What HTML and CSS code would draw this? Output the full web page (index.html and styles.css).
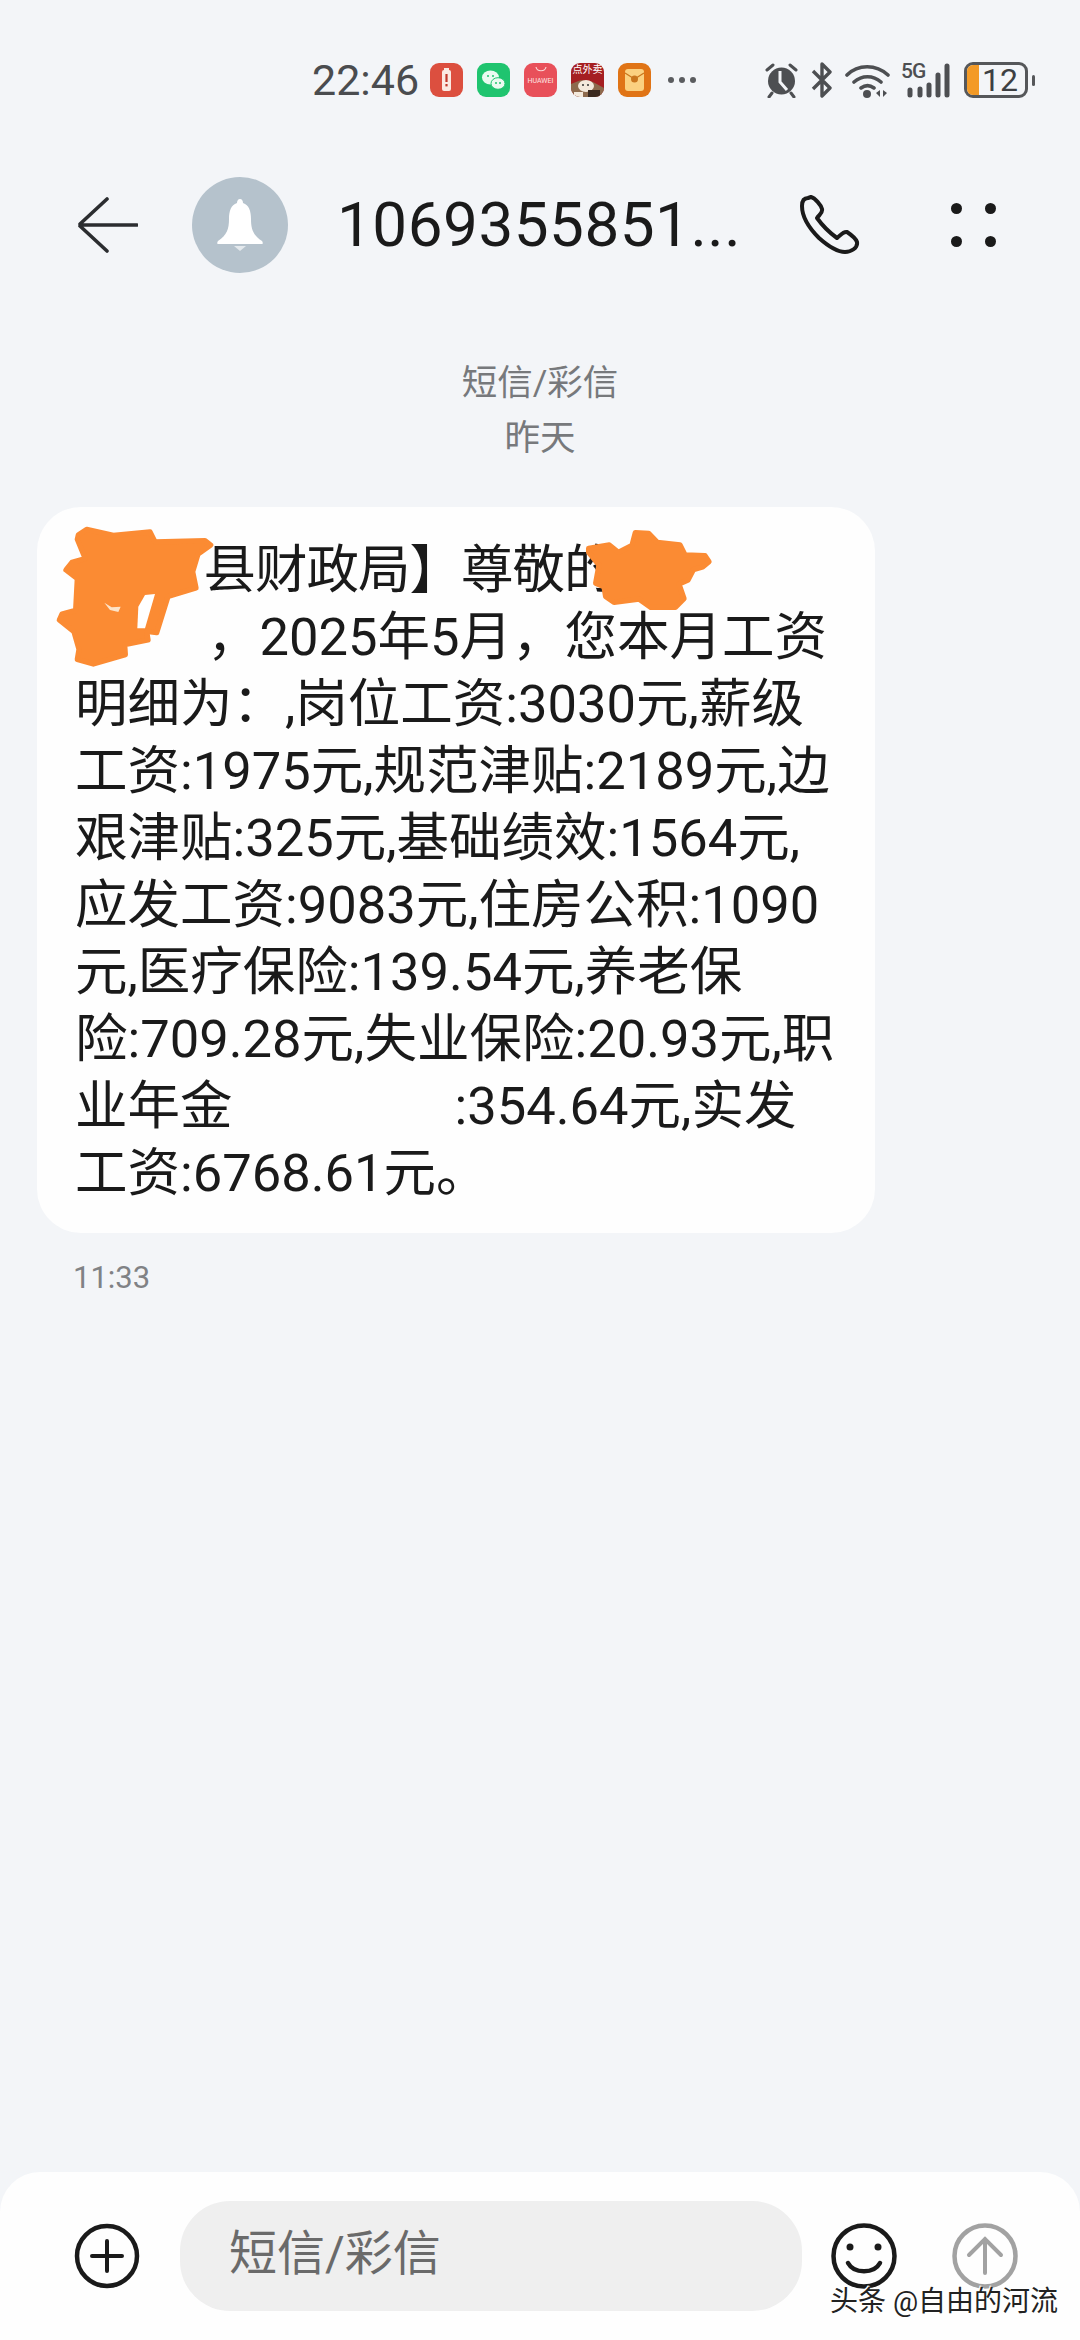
FILE: index.html
```html
<!DOCTYPE html>
<html lang="zh-CN">
<head>
<meta charset="UTF-8">
<meta name="viewport" content="width=device-width, initial-scale=1.0">
<title>短信/彩信</title>
<link rel="stylesheet" href="styles.css">
</head>
<body>

<div class="page">

  <!-- status bar -->
  <div class="status">
    <span class="clock">22:46</span>
    <div class="apps">
      <div class="app app-red">
        <svg width="33" height="34" viewBox="0 0 33 34"><rect x="12" y="7" width="9" height="21" rx="2" fill="#fbe9e2"/><rect x="14" y="5" width="5" height="3" fill="#fbe9e2"/><rect x="15.4" y="11" width="2.2" height="8" fill="#c0392b"/><rect x="15.4" y="21" width="2.2" height="2.4" fill="#c0392b"/></svg>
      </div>
      <div class="app app-green">
        <svg width="33" height="34" viewBox="0 0 33 34"><ellipse cx="13.5" cy="14.5" rx="8.5" ry="7" fill="#eafaf0"/><ellipse cx="21" cy="20.5" rx="7" ry="5.8" fill="#eafaf0" stroke="#1fc46f"/><circle cx="11" cy="13" r="1" fill="#1fc46f"/><circle cx="16" cy="13" r="1" fill="#1fc46f"/><circle cx="19" cy="20" r="1" fill="#1fc46f"/><circle cx="23" cy="20" r="1" fill="#1fc46f"/></svg>
      </div>
      <div class="app app-huawei">
        <svg class="bag" width="12" height="6" viewBox="0 0 12 6"><path d="M1 1c1 5 9 5 10 0" fill="none" stroke="#fbd5d5" stroke-width="1.2"/></svg>
        <span class="huawei-name">HUAWEI</span>
      </div>
      <div class="app app-food">
        <span class="food-name">点外卖</span>
        <svg width="33" height="21" viewBox="0 0 33 21"><path d="M0 21V8l10-4 12 2 11 6v9z" fill="#8d6a4d"/><ellipse cx="15" cy="10" rx="8" ry="6" fill="#f3e9dc"/><circle cx="12" cy="9" r="1" fill="#333"/><circle cx="17" cy="9" r="1" fill="#333"/><rect x="17" y="14" width="12" height="7" fill="#3a2a20"/><rect x="3" y="16" width="9" height="5" fill="#f3e9dc"/></svg>
      </div>
      <div class="app app-orange">
        <svg width="33" height="34" viewBox="0 0 33 34"><rect x="7" y="6" width="19" height="22" rx="3" fill="#fbd180"/><path d="M7 10l9.500 6 9.500-6" fill="none" stroke="#c9761d" stroke-width="1.200"/><circle cx="16.500" cy="16" r="3.500" fill="#c9761d"/></svg>
      </div>
      <div class="more"><i></i><i></i><i></i></div>
    </div>
    <div class="sys">
      <svg class="sys-alarm" width="33" height="36" viewBox="0 0 33 36"><path d="M2 8l6-5M31 8l-6-5M7 31l-3 4M26 31l3 4" stroke="#4d4f52" stroke-width="3" stroke-linecap="round"/><circle cx="16.500" cy="19" r="13.500" fill="#4d4f52"/><path d="M15 9v11l7 8" fill="none" stroke="#f3f5f8" stroke-width="3"/></svg>
      <svg class="sys-bt" width="22" height="36" viewBox="0 0 22 36"><path d="M2 9l17 17-8 8V2l8 8L2 27" fill="none" stroke="#4d4f52" stroke-width="3.400" stroke-linejoin="round"/></svg>
      <svg class="sys-wifi" width="45" height="36" viewBox="0 0 45 36"><path d="M2 13C13 2 31 2 43 13M9 20c8-7 19-7 27 0M16 26c4-3 9-3 13 0" fill="none" stroke="#4d4f52" stroke-width="3.600" stroke-linecap="round"/><circle cx="22" cy="32" r="4" fill="#4d4f52"/><path d="M31 31l4-3v7zM38 28l4 3-4 4z" fill="#4d4f52"/></svg>
      <div class="signal">
        <span class="net">5G</span>
        <svg width="50" height="36" viewBox="0 0 50 36"><g stroke="#4d4f52" stroke-width="5" stroke-linecap="round"><path d="M9 28v5M19 27v6M28 23v10M37 13v20M46 4v29"/></g></svg>
      </div>
      <div class="batt">
        <div class="batt-box"><span class="batt-fill"></span><span class="batt-num">12</span></div>
        <span class="batt-nub"></span>
      </div>
    </div>
  </div>

  <!-- title bar -->
  <div class="header">
    <svg class="back" width="60" height="56" viewBox="0 0 60 56"><path d="M29 2L2 27h0M2 29l27 25M4 28h55" fill="none" stroke="#2b2d30" stroke-width="3.600" stroke-linecap="round"/></svg>
    <div class="avatar">
      <svg width="48" height="52" viewBox="0 0 48 52"><path d="M24 0c2 0 3 2 3 4 6 2 8 8 8 16 0 10 2 16 11 22 1 1 1 3 0 3H2c-1 0-1-2 0-3 9-6 11-12 11-22 0-8 2-14 8-16 0-2 1-4 3-4z" fill="#fff"/><path d="M18 47h12l-6 5z" fill="#e4e9ed"/></svg>
    </div>
    <span class="title">1069355851...</span>
    <svg class="phone" width="60" height="60" viewBox="0 0 60 60"><path d="M8 3C4 3 2 6 2 11c0 11 7 22 17 32 9 8 18 14 26 14 6 0 13-4 12-10-1-3-7-8-10-10-4-1-7 4-10 6-7-5-15-13-20-20 2-3 6-5 5-9C21 10 15 3 11 2z" fill="none" stroke="#1a1a1a" stroke-width="4" stroke-linejoin="round"/></svg>
    <div class="dots"><i></i><i></i><i></i><i></i></div>
  </div>

  <!-- message list -->
  <div class="meta">
    <div>短信/彩信</div>
    <div>昨天</div>
  </div>

  <div class="bubble">
    <div class="ln ln-first">【<span class="gap-a"></span>县财政局】尊敬的</div>
    <div class="ln"><span class="gap-b"></span>，2025年5月，您本月工资</div>
    <div class="ln">明细为：,岗位工资:3030元,薪级</div>
    <div class="ln">工资:1975元,规范津贴:2189元,边</div>
    <div class="ln">艰津贴:325元,基础绩效:1564元,</div>
    <div class="ln">应发工资:9083元,住房公积:1090</div>
    <div class="ln">元,医疗保险:139.54元,养老保</div>
    <div class="ln">险:709.28元,失业保险:20.93元,职</div>
    <div class="ln">业年金<span class="gap-c"></span>:354.64元,实发</div>
    <div class="ln">工资:6768.61元。</div>

    <!-- orange scribbles over the redacted text -->
    <svg class="blob blob-one" width="180" height="190" viewBox="0 0 540 570">
      <path d="M85 105L110 88 190 106 300 96 315 126 465 122 482 135 444 162 428 215 438 264 354 289 320 398 290 394 294 420 224 434 226 464 130 492 82 478 87 448 72 395 28 360 36 342 77 331 82 236 48 210 66 187 106 176 82 118Z" fill="#fb8b33" stroke="#fb8b33" stroke-width="16" stroke-linejoin="round"/>
      <path d="M285 285L315 282 285 385 262 385 265 320Z" fill="#fff"/>
      <path d="M163 308L185 322 212 320 205 336 180 330Z" fill="#fde3c8"/>
    </svg>
    <svg class="blob blob-two" width="170" height="100" viewBox="0 0 510 300">
      <path d="M56 115L118 105 145 127 186 106 196 68 236 70 262 97 330 105 345 135 405 137 417 155 398 171 370 179 354 210 327 222 342 266 316 292 242 292 207 267 132 277 107 260 102 230 77 220 87 165 56 127Z" fill="#fb8b33" stroke="#fb8b33" stroke-width="16" stroke-linejoin="round"/>
    </svg>
  </div>

  <div class="time">11:33</div>

  <div class="spacer"></div>

  <!-- input bar -->
  <div class="composer">
    <svg class="ic-plus" width="66" height="66" viewBox="0 0 66 66"><circle cx="33" cy="33" r="30" fill="none" stroke="#1a1a1a" stroke-width="4.500"/><path d="M18 33h30M33 18v30" stroke="#1a1a1a" stroke-width="4" stroke-linecap="round"/></svg>
    <div class="input">短信/彩信</div>
    <svg class="ic-smile" width="66" height="66" viewBox="0 0 66 66"><circle cx="33" cy="33" r="30.500" fill="none" stroke="#1a1a1a" stroke-width="4.500"/><circle cx="19" cy="24" r="3.500" fill="#1a1a1a"/><circle cx="47" cy="24" r="3.500" fill="#1a1a1a"/><path d="M17 40c6 11 26 11 32 0" fill="none" stroke="#1a1a1a" stroke-width="4.500" stroke-linecap="round"/></svg>
    <svg class="ic-send" width="66" height="66" viewBox="0 0 66 66"><circle cx="33" cy="33" r="30.500" fill="none" stroke="#a2a2a2" stroke-width="4.500"/><path d="M33 50V16M17 32l16-16 16 16" fill="none" stroke="#a2a2a2" stroke-width="4" stroke-linecap="round"/></svg>
    <span class="mark">头条 @自由的河流</span>
  </div>

</div>

</body>
</html>
```

FILE: styles.css
```css
* {
  box-sizing: border-box;
}

html, body {
  margin: 0;
  padding: 0;
}

body {
  background-color: #f3f5f8;
  font-family: Roboto, "Noto Sans CJK SC", sans-serif;
  color: #1a1a1a;
}

.page {
  position: relative;
  width: 1080px;
  height: 2340px;
  overflow: hidden;
  display: flex;
  flex-direction: column;
  padding-top: 62px;
}

/* status bar */
.status {
  display: flex;
  align-items: center;
  height: 36px;
  padding-left: 312px;
}

.clock {
  width: 118px;
  font-size: 43px;
  line-height: 36px;
  color: #4a4c4f;
}

.apps {
  display: flex;
  align-items: center;
  gap: 14px;
}

.app {
  position: relative;
  width: 33px;
  height: 34px;
  border-radius: 9px;
  overflow: hidden;
}

.app svg {
  display: block;
}

.app-red { background-color: #dc4f3f; }
.app-green { background-color: #1fc46f; }
.app-orange { background-color: #e07416; }

.app-huawei {
  background-color: #e8505a;
  display: flex;
  flex-direction: column;
  align-items: center;
}

.bag {
  margin-top: 3px;
}

.huawei-name {
  margin-top: 5px;
  font-size: 7px;
  line-height: 8px;
  color: #fde4e4;
}

.app-food {
  background-color: #a51f22;
}

.food-name {
  display: block;
  height: 13px;
  font-size: 10px;
  line-height: 13px;
  text-align: center;
  color: #fff;
  white-space: nowrap;
}

.more {
  display: flex;
  gap: 5px;
  margin-left: 3px;
}

.more i {
  width: 6px;
  height: 6px;
  border-radius: 50%;
  background-color: #5a5c5f;
}

.sys {
  display: flex;
  align-items: center;
  margin-left: 69px;
}

.sys-bt { margin-left: 13px; }
.sys-wifi { margin-left: 12px; }

.signal {
  position: relative;
  width: 50px;
  height: 36px;
  margin-left: 11px;
}

.signal svg {
  display: block;
}

.net {
  position: absolute;
  left: 0;
  top: -1px;
  font-size: 21px;
  line-height: 20px;
  letter-spacing: -1px;
  font-weight: 500;
  color: #4d4f52;
}

.batt {
  display: flex;
  align-items: center;
  margin-left: 13px;
}

.batt-box {
  position: relative;
  width: 64px;
  height: 36px;
  border: 3px solid #55575a;
  border-radius: 9px;
  overflow: hidden;
  text-align: center;
}

.batt-fill {
  position: absolute;
  left: 0;
  top: 0;
  bottom: 0;
  width: 12px;
  background-color: #f39a26;
}

.batt-num {
  position: relative;
  padding-left: 8px;
  font-size: 32px;
  line-height: 30px;
  color: #3d3f42;
}

.batt-nub {
  width: 3px;
  height: 11px;
  margin-left: 4px;
  border-radius: 2px;
  background-color: #55575a;
}

/* title bar */
.header {
  display: flex;
  align-items: center;
  height: 96px;
  margin-top: 79px;
  padding-left: 78px;
}

.avatar {
  display: flex;
  align-items: center;
  justify-content: center;
  width: 96px;
  height: 96px;
  margin-left: 54px;
  border-radius: 50%;
  background-color: #b5c2cc;
}

.title {
  width: 463px;
  margin-left: 49px;
  font-size: 62px;
  line-height: 96px;
  letter-spacing: 0.5px;
  white-space: nowrap;
}

.dots {
  display: grid;
  grid-template-columns: 11px 11px;
  column-gap: 23px;
  row-gap: 22px;
  margin-left: 91px;
}

.dots i {
  width: 11px;
  height: 11px;
  border-radius: 50%;
  background-color: #1a1a1a;
}

/* message list */
.meta {
  margin-top: 83px;
  font-size: 35.5px;
  line-height: 55px;
  text-align: center;
  color: #77797c;
}

.bubble {
  position: relative;
  width: 838px;
  height: 726px;
  margin: 41px 0 0 37px;
  padding: 30px 0 0 38px;
  border-radius: 44px;
  background-color: #fefefe;
}

.ln {
  height: 67px;
  font-size: 52.5px;
  line-height: 67px;
  white-space: nowrap;
}

.ln-first {
  letter-spacing: -1px;
}

.gap-a,
.gap-b,
.gap-c {
  display: inline-block;
}

.gap-a { width: 77px; }
.gap-b { width: 132px; }
.gap-c { width: 222px; }

.blob {
  position: absolute;
}

.blob-one {
  left: 13px;
  top: -7px;
}

.blob-two {
  left: 533px;
  top: 3px;
}

.time {
  margin: 25px 0 0 73px;
  font-size: 31px;
  line-height: 40px;
  color: #808285;
}

.spacer {
  flex: 1;
}

/* input bar */
.composer {
  position: relative;
  display: flex;
  align-items: center;
  height: 168px;
  padding: 0 0 0 74px;
  border-radius: 40px 40px 0 0;
  background-color: #fefefe;
}

.input {
  width: 622px;
  height: 110px;
  margin-left: 40px;
  padding-left: 49px;
  border-radius: 50px;
  background-color: #efefef;
  font-size: 48px;
  line-height: 106px;
  color: #6a6a6a;
}

.ic-smile { margin-left: 29px; }
.ic-send { margin-left: 55px; }

/* site watermark sits on top of the icons */
.mark {
  position: absolute;
  left: 830px;
  top: 112px;
  font-size: 28px;
  line-height: 36px;
  color: #222;
  text-shadow: 1px 1px 0 #fff, -1px -1px 0 #fff;
  white-space: nowrap;
}
```
